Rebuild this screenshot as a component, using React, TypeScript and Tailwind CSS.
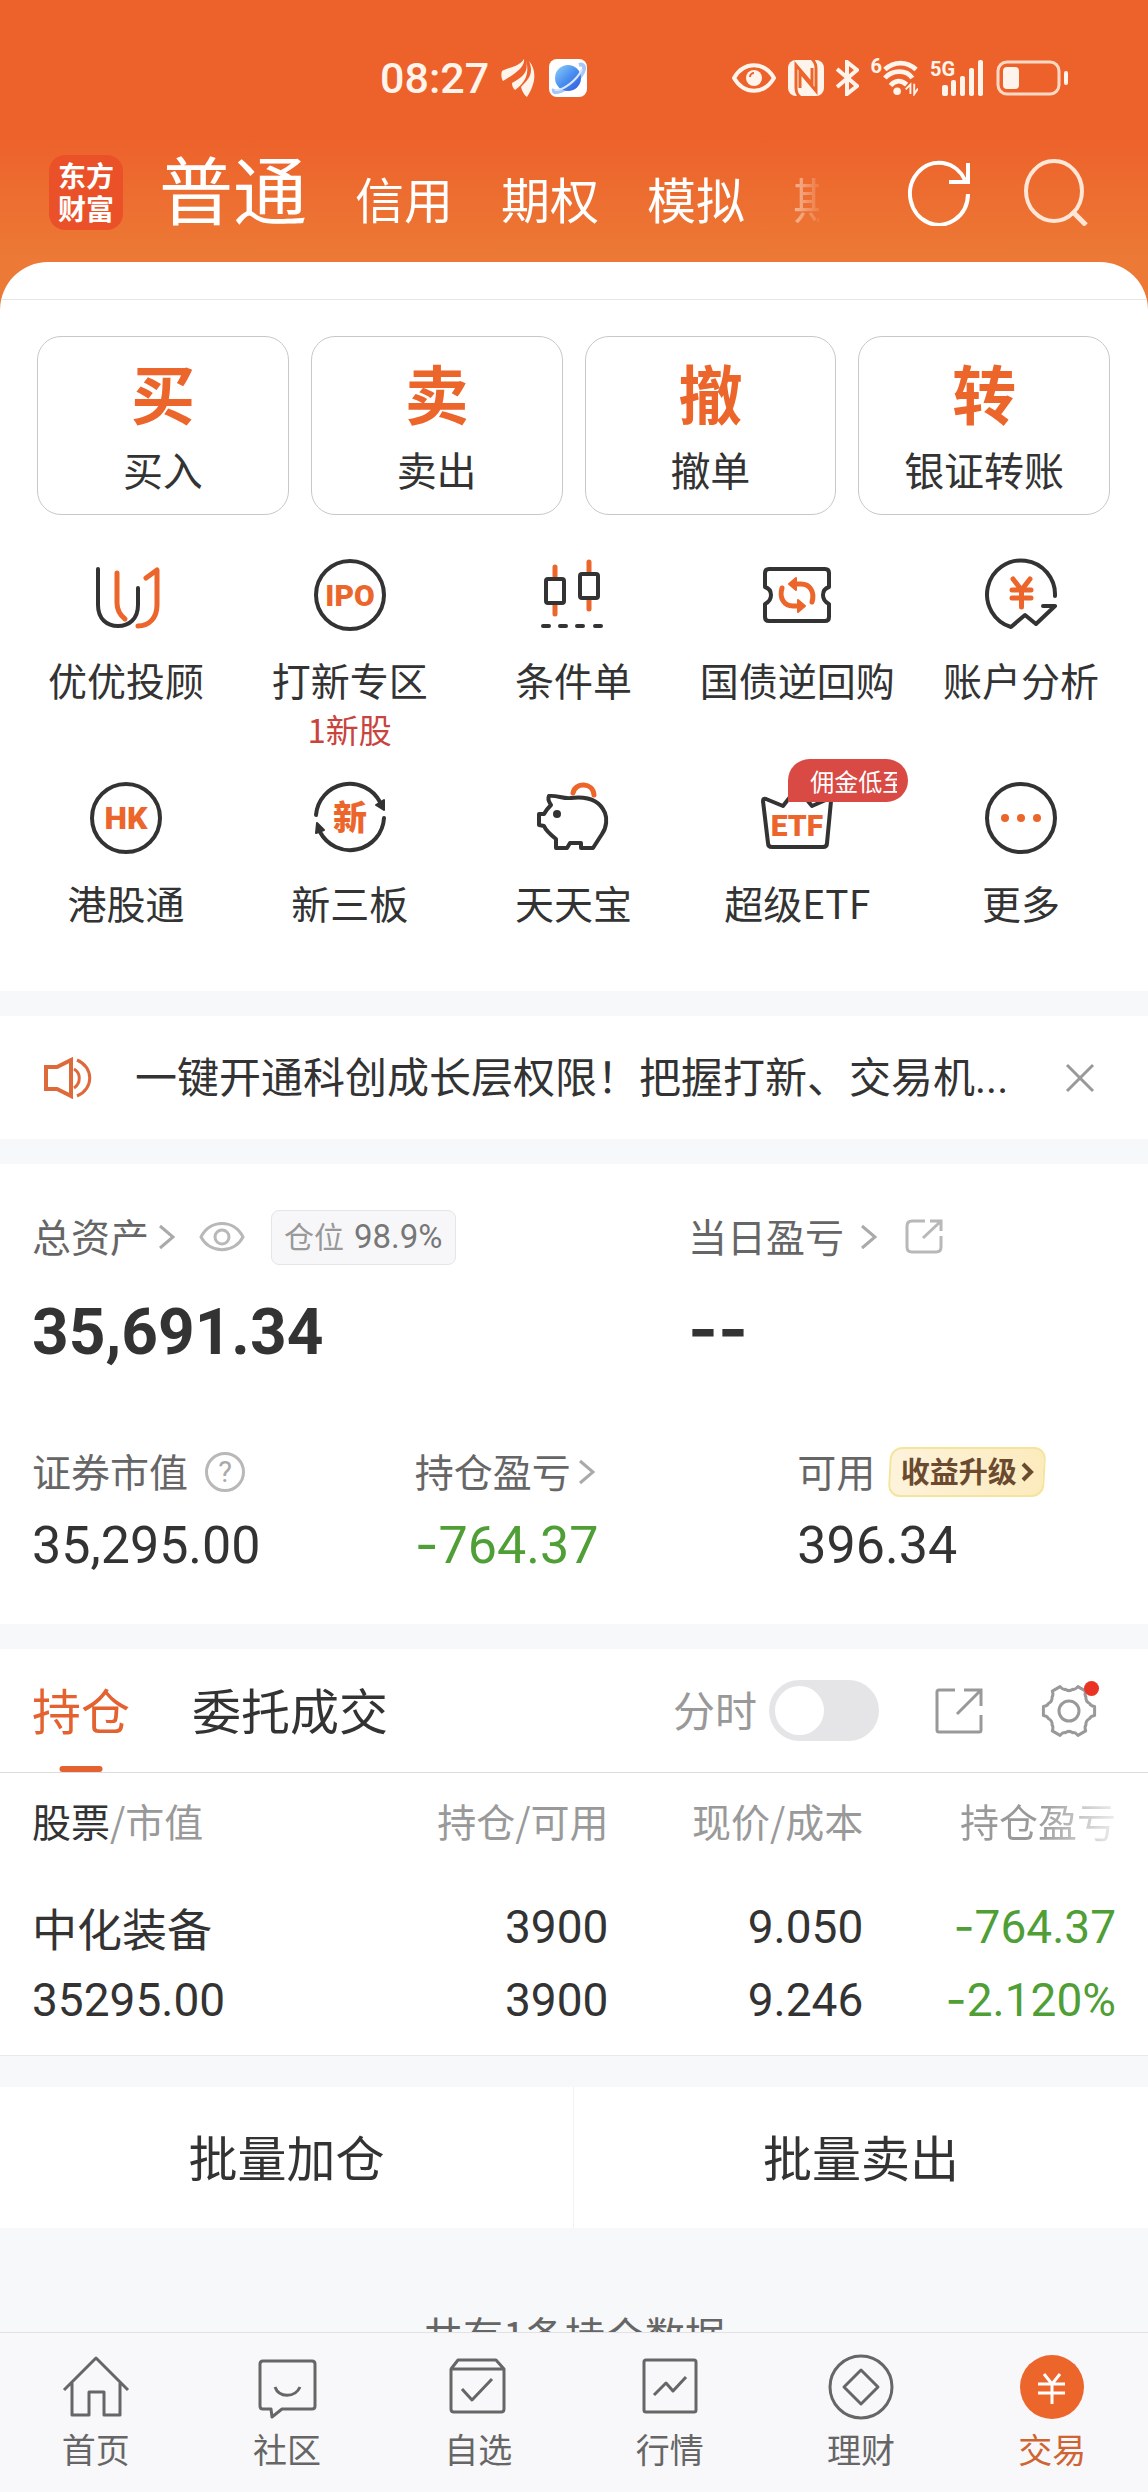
import React, { type ReactNode } from 'react';

const ORANGE = '#ec652b';
const INK = '#333333';

/* ---------- status bar ---------- */

function WingIcon() {
  return (
    <svg width="36" height="38" viewBox="0 0 36 38" fill="#fff4ec" aria-hidden="true">
      <path d="M1 12C8 8 18 8 23 0c1 8-8 14-21 22C0 19 0 15 1 12Z" />
      <path d="M25 1c3 12-3 17-14 23 0 3 1 5 3 7C24 24 29 15 25 1Z" />
      <path d="M28 2c5 12 0 18-8 26 1 4 3 8 6 10 6-9 12-24 2-36Z" />
    </svg>
  );
}

function GlobeIcon() {
  return (
    <svg width="38" height="38" viewBox="0 0 38 38" aria-hidden="true">
      <defs>
        <linearGradient id="globe" x1="0" y1="0" x2="1" y2="1">
          <stop offset="0" stopColor="#8fd0f8" />
          <stop offset="0.5" stopColor="#4a8ff0" />
          <stop offset="1" stopColor="#2f55dd" />
        </linearGradient>
      </defs>
      <rect width="38" height="38" rx="8" fill="#fff" />
      <path d="M5 30C2 38 20 30 29 20S36 4 30 6" fill="none" stroke="#a9c6f7" strokeWidth="4" />
      <circle cx="19" cy="19" r="13" fill="url(#globe)" />
      <path d="M6 31C13 32 28 22 33 10" fill="none" stroke="#d6e8ff" strokeWidth="2" />
    </svg>
  );
}

function StatusIcons() {
  return (
    <div className="flex items-center gap-3 text-[#fff4ec]">
      <svg width="44" height="30" viewBox="0 0 44 30" fill="none" aria-label="护眼模式">
        <path d="M2 15C12-2 32-2 42 15C32 32 12 32 2 15Z" stroke="currentColor" strokeWidth="4" />
        <circle cx="22" cy="15" r="8" fill="currentColor" />
        <path d="M18 14a4 4 0 0 1 4-4" stroke={ORANGE} strokeWidth="2" />
      </svg>
      <svg width="36" height="36" viewBox="0 0 36 36" aria-label="NFC">
        <rect width="36" height="36" rx="8" fill="currentColor" />
        <path d="M12 37Q8 34 8 28V5L24 24V8M24 -1Q28 3 28 8V31L12 12V28" fill="none" stroke={ORANGE} strokeWidth="3" />
      </svg>
      <svg width="23" height="36" viewBox="0 0 23 36" fill="none" stroke="currentColor" strokeWidth="4" aria-label="蓝牙">
        <path d="M1 9L21 26L11 34V2L21 10L1 27" />
      </svg>
      <div className="flex items-start">
        <span className="-mt-1 font-[Roboto] text-[20px] leading-5 font-bold">6</span>
        <svg width="36" height="36" viewBox="0 0 38 36" fill="none" stroke="currentColor" strokeWidth="5" aria-label="无线网络">
          <path d="M3 9C13 0 26 0 36 9" />
          <path d="M3 18C11 9 26 9 32 18" />
          <path d="M9 26C14 20 20 20 26 25" />
          <circle cx="16" cy="32" r="4" fill="currentColor" stroke="none" />
          <path d="M30 35V25L25 30M34 24V35L38 29" strokeWidth="2" />
        </svg>
      </div>
      <svg width="54" height="36" viewBox="0 0 54 36" fill="currentColor" aria-label="信号">
        <text x="0" y="16" fontFamily="Roboto" fontWeight="700" fontSize="20">5G</text>
        <rect x="12" y="25" width="6" height="11" rx="2" />
        <rect x="21" y="20" width="5" height="16" rx="2" />
        <rect x="30" y="16" width="5" height="20" rx="2" />
        <rect x="39" y="8" width="5" height="28" rx="2" />
        <rect x="48" y="0" width="5" height="36" rx="2" />
      </svg>
      <svg width="73" height="36" viewBox="0 0 73 36" fill="none" aria-label="电池">
        <rect x="2" y="2" width="61" height="32" rx="9" stroke="#ffd9c5" strokeWidth="3" />
        <rect x="7" y="7" width="16" height="22" rx="4" fill="currentColor" />
        <rect x="68" y="11" width="4" height="14" rx="2" fill="currentColor" />
      </svg>
    </div>
  );
}

/* ---------- shortcut icons ---------- */

function Glyph({ children }: { children: ReactNode }) {
  return (
    <svg
      width="72"
      height="72"
      viewBox="0 0 72 72"
      fill="none"
      stroke={INK}
      strokeWidth="4"
      strokeLinecap="round"
      strokeLinejoin="round"
      overflow="visible"
      aria-hidden="true"
    >
      {children}
    </svg>
  );
}

function GlyphText({ y, size, children }: { y: number; size: number; children: string }) {
  return (
    <text
      x="36"
      y={y}
      textAnchor="middle"
      fontFamily="Roboto, 'Noto Sans CJK SC', sans-serif"
      fontWeight="900"
      fontSize={size}
      fill={ORANGE}
      stroke="none"
    >
      {children}
    </text>
  );
}

const advisorIcon = (
  <Glyph>
    <path d="M8 10V46C8 60 17 67 28 67S48 60 48 46V29" />
    <path d="M27 14V44C27 52 30 56 35 60M56 19L67 11V46C67 59 59 67 48 67" stroke={ORANGE} strokeWidth="5" />
  </Glyph>
);
const ipoIcon = (
  <Glyph>
    <circle cx="36" cy="36" r="34" />
    <GlyphText y={47} size={30}>IPO</GlyphText>
  </Glyph>
);
const conditionIcon = (
  <Glyph>
    <path d="M18 8V17M18 46V55M52 3V12M52 41V50" stroke={ORANGE} strokeWidth="5" />
    <rect x="9" y="20" width="18" height="24" rx="2" />
    <rect x="43" y="15" width="18" height="24" rx="2" />
    <path d="M6 67H12M23 67H29M40 67H46M58 67H64" />
  </Glyph>
);
const bondIcon = (
  <Glyph>
    <path d="M4 28V14Q4 10 8 10H64Q68 10 68 14V28Q62 30 62 36T68 45V58Q68 62 64 62H8Q4 62 4 58V45Q10 42 10 36T4 28Z" />
    <path d="M33 25H40C49 25 54 33 51 43M39 47H32C23 47 18 39 21 29" stroke={ORANGE} strokeWidth="5" />
    <path d="M35 19V31L28 25ZM37 41V53L44 47Z" fill={ORANGE} stroke={ORANGE} strokeWidth="2" />
  </Glyph>
);
const analysisIcon = (
  <Glyph>
    <path d="M70 37A34 34 0 1 0 26 68L40 56L51 65L70 47H58" />
    <path d="M28 20L36.500 31L45 20M36.500 31V48M27 31H46M27 39H46" stroke={ORANGE} strokeWidth="5" />
  </Glyph>
);
const hkIcon = (
  <Glyph>
    <circle cx="36" cy="36" r="34" />
    <GlyphText y={47} size={32}>HK</GlyphText>
  </Glyph>
);
const neeqIcon = (
  <Glyph>
    <path d="M2 33A34 34 0 0 1 66 20M70 36A34 34 0 0 1 6 50" />
    <path d="M70 18V28L62 23ZM3 41L2 51L10 48Z" fill={INK} strokeWidth="2" />
    <GlyphText y={48} size={34}>新</GlyphText>
  </Glyph>
);
const piggyIcon = (
  <Glyph>
    <path d="M36 11C38 0 56 0 57 13" stroke={ORANGE} strokeWidth="5" />
    <path d="M34 16C26 17 20 13 12 14C10 18 13 21 14 23C11 26 9 28 7 32H2V43L7 44C9 49 14 53 19 57V66H30L33 61H44V66H56L65 52C70 45 70 36 68 31C63 19 51 14 34 16Z" />
    <circle cx="20" cy="32" r="4" fill={INK} stroke="none" />
  </Glyph>
);
const etfIcon = (
  <Glyph>
    <path d="M2 19Q2 16 5 17L22 24L36 6L51 24L67 17Q70 16 70 19L66 61Q66 65 62 65H11Q7 65 7 61Z" />
    <GlyphText y={54} size={30}>ETF</GlyphText>
  </Glyph>
);
const moreIcon = (
  <Glyph>
    <circle cx="36" cy="36" r="34" />
    <g fill={ORANGE} stroke="none">
      <circle cx="20" cy="36" r="4" />
      <circle cx="36" cy="36" r="4" />
      <circle cx="52" cy="36" r="4" />
    </g>
  </Glyph>
);

type Shortcut = { label: string; icon: ReactNode; note?: string; badge?: string };

const shortcuts: Shortcut[] = [
  { label: '优优投顾', icon: advisorIcon },
  { label: '打新专区', icon: ipoIcon, note: '1新股' },
  { label: '条件单', icon: conditionIcon },
  { label: '国债逆回购', icon: bondIcon },
  { label: '账户分析', icon: analysisIcon },
  { label: '港股通', icon: hkIcon },
  { label: '新三板', icon: neeqIcon },
  { label: '天天宝', icon: piggyIcon },
  { label: '超级ETF', icon: etfIcon, badge: '佣金低至' },
  { label: '更多', icon: moreIcon },
];

const tradeActions = [
  { mark: '买', label: '买入' },
  { mark: '卖', label: '卖出' },
  { mark: '撤', label: '撤单' },
  { mark: '转', label: '银证转账' },
];

/* ---------- small shared pieces ---------- */

function Chevron() {
  return (
    <svg width="16" height="26" viewBox="0 0 16 26" fill="none" stroke="#aaaaaa" strokeWidth="3" aria-hidden="true">
      <path d="M1 2L14 13L1 24" />
    </svg>
  );
}

/** A negative amount, with the wider hyphen used for the sign. */
function Loss({ value }: { value: string }) {
  return (
    <>
      <span className="font-[Inter] leading-none">-</span>
      {value}
    </>
  );
}

function gearOutline() {
  const point = (deg: number, r: number) => {
    const a = (deg * Math.PI) / 180;
    return `${(28 + r * Math.cos(a)).toFixed(1)} ${(28 + r * Math.sin(a)).toFixed(1)}`;
  };
  let d = '';
  for (let i = 0; i < 6; i++) {
    const t = i * 60;
    d += `${i === 0 ? 'M' : 'L'}${point(t - 10, 26)}L${point(t + 10, 26)}Q${point(t + 14, 22)} ${point(t + 20, 22)}`;
    d += `Q${point(t + 30, 19)} ${point(t + 40, 22)}Q${point(t + 46, 22)} ${point(t + 50, 26)}`;
  }
  return d + 'Z';
}

/* ---------- bottom navigation ---------- */

function NavGlyph({ children }: { children: ReactNode }) {
  return (
    <svg width="68" height="68" viewBox="0 0 68 68" fill="none" stroke="#666666" strokeWidth="3" strokeLinejoin="round" aria-hidden="true">
      {children}
    </svg>
  );
}

const navItems = [
  {
    label: '首页',
    icon: (
      <NavGlyph>
        <path d="M2 37L34 5L66 37M10 30V62H27V39H42V62H58V30" />
      </NavGlyph>
    ),
  },
  {
    label: '社区',
    icon: (
      <NavGlyph>
        <path d="M10 8H59Q62 8 62 11V53Q62 56 59 56H29L19 64L18 56H10Q7 56 7 53V11Q7 8 10 8Z" />
        <path d="M22 34C26 45 42 45 47 34" />
      </NavGlyph>
    ),
  },
  {
    label: '自选',
    icon: (
      <NavGlyph>
        <path d="M7 16L14 7H52L60 16V56Q60 59 57 59H10Q7 59 7 56V16H60M18 36L28 47L48 26" />
      </NavGlyph>
    ),
  },
  {
    label: '行情',
    icon: (
      <NavGlyph>
        <rect x="8" y="7" width="52" height="52" rx="2" />
        <path d="M18 42L30 30L37 38L50 24" />
      </NavGlyph>
    ),
  },
  {
    label: '理财',
    icon: (
      <NavGlyph>
        <circle cx="34" cy="34" r="31" />
        <path d="M34 17L51 34L34 51L17 34Z" />
      </NavGlyph>
    ),
  },
  {
    label: '交易',
    active: true,
    icon: (
      <NavGlyph>
        <circle cx="34" cy="34" r="32" fill={ORANGE} stroke="none" />
        <path d="M26 21L34 31L42 21M34 31V51M20 31H47M20 40H47" stroke="#ffffff" />
      </NavGlyph>
    ),
  },
];

/* ---------- sections ---------- */

function Header() {
  return (
    <header className="bg-linear-to-b from-[#ed622b] from-45% to-[#ec7a36] to-85% pt-[50px] pb-[68px] text-white">
      <div className="flex h-14 items-center justify-between pr-[79px] pl-[380px]">
        <div className="flex items-center gap-3">
          <time className="font-[Roboto] text-[43px] leading-none font-medium text-[#fff4ec]">08:27</time>
          <WingIcon />
          <GlobeIcon />
        </div>
        <StatusIcons />
      </div>
      <div className="mt-9 flex h-[100px] items-center pr-[58px] pl-[49px]">
        <a href="#home" aria-label="东方财富" className="flex h-[75px] w-[74px] shrink-0 flex-col items-center justify-center rounded-2xl bg-[#ea5128] text-[28px] leading-[33px] font-bold">
          <span>东方</span>
          <span>财富</span>
        </a>
        <nav className="ml-9 flex min-w-0 flex-1 items-baseline gap-12 pb-[10px] text-[49px] whitespace-nowrap">
          <a href="#normal" className="text-[74px] leading-[110px]">普通</a>
          <a href="#margin">信用</a>
          <a href="#options">期权</a>
          <a href="#demo">模拟</a>
          <a href="#futures" aria-label="期货" className="w-[26px] overflow-hidden bg-linear-to-r from-white/50 to-white/10 bg-clip-text text-transparent">期货</a>
        </nav>
        <button type="button" aria-label="刷新" className="shrink-0">
          <svg width="64" height="68" viewBox="0 0 64 68" fill="none" stroke="#ffffff" strokeWidth="4">
            <path d="M60 36A29 31 0 1 1 57 22" />
            <path d="M60 5V24H41" />
          </svg>
        </button>
        <button type="button" aria-label="搜索" className="ml-[51px] shrink-0">
          <svg width="67" height="68" viewBox="0 0 67 68" fill="none" stroke="#ffe6d6" strokeWidth="4">
            <ellipse cx="31" cy="33" rx="28" ry="30" />
            <path d="M49 53L63 67" strokeWidth="5" />
          </svg>
        </button>
      </div>
    </header>
  );
}

function Actions() {
  return (
    <section className="bg-white">
      <div className="grid grid-cols-4 gap-[22px] pt-9 pr-[38px] pl-[37px]">
        {tradeActions.map((a) => (
          <button key={a.label} type="button" className="flex flex-col items-center rounded-3xl border border-[#c8c8c8] pt-[22px] pb-[17px]">
            <span className="text-[64px] leading-[64px] font-bold text-[#ec652b]">{a.mark}</span>
            <span className="mt-[18px] text-[40px] leading-[56px]">{a.label}</span>
          </button>
        ))}
      </div>
      <div className="mt-11 grid grid-cols-5 gap-y-[35px] pr-[15px] pb-[21px] pl-[14px]">
        {shortcuts.map((s) => (
          <a key={s.label} href={`#${s.label}`} className="relative flex flex-col items-center">
            {s.icon}
            {s.badge && (
              <span className="absolute -top-[23px] left-1/2 ml-[-9px] h-[43px] w-[120px] rounded-[22px] rounded-bl-none bg-[#da4a45] px-3 pl-[22px] text-[24px] leading-[43px] text-white">
                <span className="block w-[87px] overflow-hidden whitespace-nowrap">{s.badge}</span>
              </span>
            )}
            <span className="mt-5 text-[39px] leading-[56px] whitespace-nowrap">{s.label}</span>
            <span className="mt-1 h-9 text-[33px] leading-9 text-[#c8453e]">{s.note}</span>
          </a>
        ))}
      </div>
    </section>
  );
}

function Notice() {
  return (
    <section className="flex h-[123px] items-center bg-white pr-[53px] pl-[44px]">
      <svg width="48" height="42" viewBox="0 0 48 42" fill="none" stroke="#dd6a3a" strokeWidth="4" className="shrink-0" aria-hidden="true">
        <path d="M2 10H13L27 3V39L13 32H2Z" />
        <path d="M30 12C37 16 37 26 30 31M33 3C50 10 50 32 33 39" strokeWidth="3" />
      </svg>
      <p className="ml-[43px] min-w-0 flex-1 overflow-hidden pb-[2px] text-[42px] leading-[64px] whitespace-nowrap">
        一键开通科创成长层权限！把握打新、交易机<span className="font-[Roboto]">...</span>
      </p>
      <button type="button" aria-label="关闭" className="shrink-0">
        <svg width="30" height="30" viewBox="0 0 30 30" fill="none" stroke="#999999" strokeWidth="3">
          <path d="M2 2L28 28M28 2L2 28" />
        </svg>
      </button>
    </section>
  );
}

function Assets() {
  return (
    <section className="bg-white pt-[45px] pb-[46px] text-[39px] text-[#666666]">
      <div className="grid grid-cols-[656fr_460fr] pl-8">
        <div>
          <div className="flex h-14 items-center">
            <a href="#total" className="flex items-center gap-[10px]">
              <span className="pb-1">总资产</span>
              <Chevron />
            </a>
            <button type="button" aria-label="隐藏金额" className="ml-6">
              <svg width="46" height="32" viewBox="0 0 46 32" fill="none" stroke="#b8b8b8" strokeWidth="3">
                <path d="M2 16C11-2 35-2 44 16C35 33 11 33 2 16Z" />
                <circle cx="23" cy="16" r="7" />
              </svg>
            </button>
            <span className="ml-[26px] flex h-[55px] items-center gap-[10px] rounded-lg border border-[#e5e5e8] bg-[#f7f7fa] px-3 text-[30px] text-[#999999]">
              <span className="pb-1">仓位</span>
              <span className="font-[Roboto] text-[33px] text-[#777777]">98.9%</span>
            </span>
          </div>
          <div className="mt-7 font-[Roboto] text-[64px] leading-[80px] font-bold text-[#333333]">35,691.34</div>
        </div>
        <div>
          <div className="flex h-14 items-center">
            <a href="#today" className="flex items-center gap-[17px]">
              <span className="pb-1">当日盈亏</span>
              <Chevron />
            </a>
            <button type="button" aria-label="分享盈亏" className="ml-7">
              <svg width="38" height="36" viewBox="0 0 38 36" fill="none" stroke="#b8b8b8" strokeWidth="3">
                <path d="M20 2H7Q2 2 2 7V28Q2 33 7 33H31Q36 33 36 28V17M18 19L35 3M25 2H36V12" />
              </svg>
            </button>
          </div>
          <div className="mt-6 font-[Inter] text-[64px] leading-[80px] font-bold text-[#333333]">--</div>
        </div>
      </div>
      <dl className="mt-[73px] grid grid-cols-3">
        <div className="pl-8">
          <dt className="flex h-[52px] items-center gap-[17px]">
            <span className="pb-1">证券市值</span>
            <button type="button" aria-label="说明" className="flex size-10 items-center justify-center rounded-full border-[3px] border-[#b8b8b8] font-[Roboto] text-[29px] leading-none text-[#aaaaaa]">
              ?
            </button>
          </dt>
          <dd className="mt-4 font-[Roboto] text-[52px] leading-[64px] text-[#333333]">35,295.00</dd>
        </div>
        <div className="pl-8">
          <dt className="flex h-[52px] items-center gap-2">
            <span className="pb-1">持仓盈亏</span>
            <Chevron />
          </dt>
          <dd className="mt-4 font-[Roboto] text-[52px] leading-[64px] text-[#4f9e36]">
            <Loss value="764.37" />
          </dd>
        </div>
        <div className="pl-8">
          <dt className="flex h-[52px] items-center gap-[14px]">
            <span className="pb-1">可用</span>
            <a
              href="#upgrade"
              className="relative flex h-[50px] w-[156px] items-center justify-center gap-1 text-[29px] font-bold text-[#6b4a2f] before:absolute before:inset-0 before:-skew-x-3 before:rounded-xl before:border-2 before:border-[#f5e49c] before:bg-linear-to-r before:from-[#fdf3dc] before:to-[#fcebbd]"
            >
              <span className="relative pb-[2px]">收益升级</span>
              <svg width="13" height="20" viewBox="0 0 13 20" fill="none" stroke="#6b4a2f" strokeWidth="4" className="relative" aria-hidden="true">
                <path d="M2 2L10 10L2 18" />
              </svg>
            </a>
          </dt>
          <dd className="mt-4 font-[Roboto] text-[52px] leading-[64px] text-[#333333]">396.34</dd>
        </div>
      </dl>
    </section>
  );
}

function Positions() {
  return (
    <section className="border-b border-[#e9e9ec] bg-white">
      <div className="flex h-[124px] items-center border-b border-[#dddddd] pr-[51px] pl-8">
        <div role="tablist" className="flex h-full gap-[62px] text-[49px]">
          <button type="button" role="tab" aria-selected="true" className="relative pb-1 text-[#e3622f]">
            持仓
            <span className="absolute bottom-0 left-1/2 h-[6px] w-[43px] -translate-x-1/2 rounded-full bg-[#e3622f]" />
          </button>
          <button type="button" role="tab" aria-selected="false" className="pb-1">委托成交</button>
        </div>
        <label className="ml-auto flex items-center gap-3 text-[42px] text-[#999999]">
          <span className="pb-1">分时</span>
          <input
            type="checkbox"
            role="switch"
            className="h-[61px] w-[110px] appearance-none rounded-full bg-[#e5e5e7] p-[6px] before:block before:size-[49px] before:rounded-full before:bg-white"
          />
        </label>
        <button type="button" aria-label="分享持仓" className="ml-14">
          <svg width="48" height="48" viewBox="0 0 48 48" fill="none" stroke="#999999" strokeWidth="3">
            <path d="M20 3H4Q2 3 2 5V43Q2 45 4 45H44Q46 45 46 43V28M22 27L45 4M29 3H46V19" />
          </svg>
        </button>
        <button type="button" aria-label="设置" className="relative ml-[58px]">
          <svg width="56" height="56" viewBox="0 0 56 56" fill="none" stroke="#999999" strokeWidth="3" strokeLinejoin="round">
            <path d={gearOutline()} />
            <circle cx="28" cy="28" r="10" />
          </svg>
          <span className="absolute -top-[2px] -right-[2px] size-[15px] rounded-full bg-[#e93425]" />
        </button>
      </div>
      <table className="w-full table-fixed text-right">
        <colgroup>
          <col className="w-[28%]" />
          <col className="w-[25%]" />
          <col className="w-[22.2%]" />
          <col />
        </colgroup>
        <thead>
          <tr className="h-[94px] text-[39px] whitespace-nowrap text-[#999999]">
            <th scope="col" className="pl-8 text-left font-normal"><span className="text-[#333333]">股票</span>/市值</th>
            <th scope="col" className="font-normal">持仓/可用</th>
            <th scope="col" className="font-normal">现价/成本</th>
            <th scope="col" className="pr-8 font-normal">
              <span className="bg-linear-to-r from-[#999999] from-50% to-[#eeeeee] bg-clip-text text-transparent">持仓盈亏</span>
            </th>
          </tr>
        </thead>
        <tbody className="font-[Roboto] text-[46px] leading-[73px]">
          <tr>
            <td className="pt-6 pb-[18px] pl-8 text-left">
              <div className="font-['Noto_Sans_CJK_SC',sans-serif] text-[45px]">中化装备</div>
              <div>35295.00</div>
            </td>
            <td className="pt-6 pb-[18px]">
              <div>3900</div>
              <div>3900</div>
            </td>
            <td className="pt-6 pb-[18px]">
              <div>9.050</div>
              <div>9.246</div>
            </td>
            <td className="pt-6 pr-8 pb-[18px] text-[#4f9e36]">
              <div><Loss value="764.37" /></div>
              <div><Loss value="2.120%" /></div>
            </td>
          </tr>
        </tbody>
      </table>
    </section>
  );
}

export default function App() {
  return (
    <div className="flex h-screen flex-col overflow-hidden bg-[#f7f8fa] font-['Noto_Sans_CJK_SC',sans-serif] text-[#333333]">
      <Header />
      <main className="-mt-12 flex min-h-0 flex-1 flex-col gap-[25px] overflow-hidden rounded-t-[48px]">
        <div className="shrink-0">
          <div className="h-[38px] border-b border-[#e5e5e5] bg-white" />
          <Actions />
        </div>
        <div className="shrink-0"><Notice /></div>
        <div className="shrink-0"><Assets /></div>
        <div className="shrink-0">
          <Positions />
          <div className="mt-[31px] grid grid-cols-2 bg-white text-[49px] leading-[137px]">
            <button type="button" className="border-r border-[#f2f2f4] pb-1">批量加仓</button>
            <button type="button" className="pb-1">批量卖出</button>
          </div>
          <p className="pt-20 text-center text-[40px] leading-[52px] text-[#666666]">共有1条持仓数据</p>
        </div>
      </main>
      <nav className="grid shrink-0 grid-cols-6 border-t border-[#e2e2e4] bg-[#f8f8fa] pt-5 pb-[23px] text-[34px] leading-10 text-[#666666]">
        {navItems.map((n) => (
          <a key={n.label} href={`#${n.label}`} aria-current={n.active ? 'page' : undefined} className="flex flex-col items-center gap-2">
            {n.icon}
            <span className={n.active ? 'text-[#cf6433]' : ''}>{n.label}</span>
          </a>
        ))}
      </nav>
    </div>
  );
}
